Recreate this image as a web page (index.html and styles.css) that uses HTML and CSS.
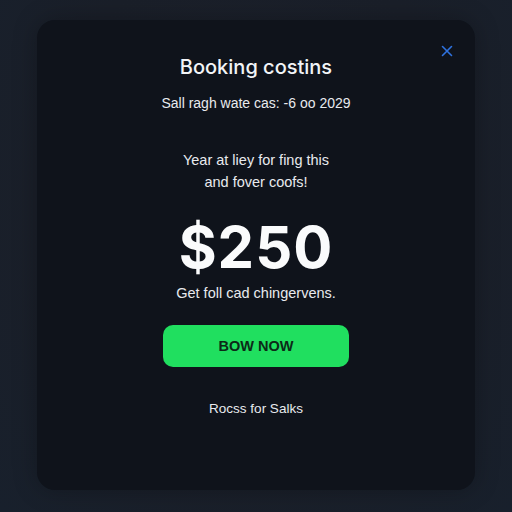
FILE: index.html
```html
<!DOCTYPE html>
<html>
<head>
<meta charset="utf-8">
<link rel="stylesheet" href="styles.css">
</head>
<body>
<div class="modal">
  <button class="close" aria-label="Close">
    <svg width="12" height="12" viewBox="0 0 12 12"><path d="M1.5 1.5 L10.5 10.5 M10.5 1.5 L1.5 10.5" stroke="#2f72e0" stroke-width="1.6" stroke-linecap="round"/></svg>
  </button>
  <h1 class="title">Booking costins</h1>
  <p class="sub">Sall ragh wate cas: -6 oo 2029</p>
  <p class="body">Year at liey for fing this<br>and fover coofs!</p>
  <div class="price">$250</div>
  <p class="note">Get foll cad chingervens.</p>
  <button class="cta">BOW NOW</button>
  <a class="link">Rocss for Salks</a>
</div>
</body>
</html>
```
FILE: styles.css
```css
html, body {
  margin: 0;
  padding: 0;
}
body {
  width: 512px;
  height: 512px;
  background: radial-gradient(ellipse at 50% 40%, #1c212c 0%, #1a1f29 60%, #18202c 100%);
  font-family: "Liberation Sans", Arial, sans-serif;
  color: #f2f4f7;
  display: flex;
  justify-content: center;
  padding-top: 20px;
  box-sizing: border-box;
}
.modal {
  position: relative;
  width: 438px;
  height: 470px;
  background: #0f131b;
  border-radius: 18px;
  display: flex;
  flex-direction: column;
  align-items: center;
  box-shadow: 0 0 24px rgba(0,0,0,0.25);
}
.close {
  position: absolute;
  top: 25px;
  right: 22px;
  background: none;
  border: 0;
  padding: 0;
  width: 12px;
  height: 12px;
  display: flex;
}
.title {
  margin: 34px 0 0;
  font-family: Inter, "Noto Sans", sans-serif;
  font-size: 20px;
  font-weight: 500;
  line-height: 26px;
  letter-spacing: 0;
}
.sub {
  margin: 14px 0 0;
  font-size: 14px;
  line-height: 18px;
  color: #e8eaee;
}
.body {
  margin: 37px 0 0;
  font-size: 14.5px;
  line-height: 22px;
  text-align: center;
  color: #e8eaee;
}
.price {
  margin-top: 20px;
  font-family: Inter, "Noto Sans", sans-serif;
  font-size: 58px;
  font-weight: 700;
  line-height: 68px;
  letter-spacing: 1px;
  color: #fafbfc;
}
.note {
  margin: 3px 0 0;
  font-size: 14.5px;
  line-height: 18px;
  color: #e8eaee;
}
.cta {
  margin-top: 23px;
  width: 186px;
  height: 42px;
  border: 0;
  border-radius: 10px;
  background: #20df5f;
  color: #0c2a17;
  font-family: "Liberation Sans", Arial, sans-serif;
  font-size: 14.5px;
  font-weight: 700;
}
.link {
  margin-top: 33px;
  font-size: 13.5px;
  line-height: 18px;
  color: #e8eaee;
}
```
